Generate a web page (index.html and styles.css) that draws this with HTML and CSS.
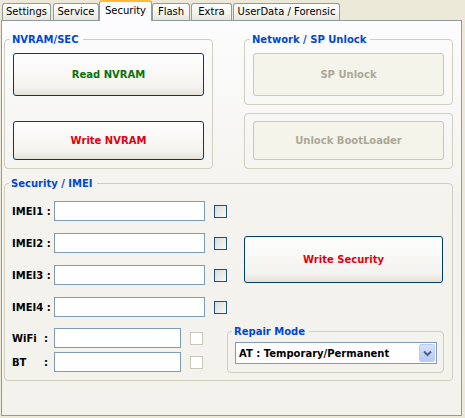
FILE: index.html
```html
<!DOCTYPE html>
<html>
<head>
    <title>Security</title>
    <link rel="stylesheet" href="styles.css">
</head>
<body>
    <div class="tabs">
        <div class="tab tab-settings">Settings</div>
        <div class="tab tab-service">Service</div>
        <div class="tab tab-security active">Security</div>
        <div class="tab tab-flash">Flash</div>
        <div class="tab tab-extra">Extra</div>
        <div class="tab tab-userdata">UserData / Forensic</div>
    </div>

    <div class="page">
        <div class="top">
            <fieldset class="group">
                <legend>NVRAM/SEC</legend>
                <button class="btn tall green">Read NVRAM</button>
                <button class="btn red spaced">Write NVRAM</button>
            </fieldset>
            <div class="col">
                <fieldset class="group">
                    <legend>Network / SP Unlock</legend>
                    <button class="btn tall" disabled>SP Unlock</button>
                </fieldset>
                <div class="group plain">
                    <button class="btn" disabled>Unlock BootLoader</button>
                </div>
            </div>
        </div>

        <fieldset class="group security">
            <legend>Security / IMEI</legend>
            <div class="imei-area">
                <div class="rows">
                    <div class="row">
                        <span class="lbl">IMEI1 :</span>
                        <input type="text" class="field">
                        <span class="check"></span>
                    </div>
                    <div class="row">
                        <span class="lbl">IMEI2 :</span>
                        <input type="text" class="field">
                        <span class="check"></span>
                    </div>
                    <div class="row">
                        <span class="lbl">IMEI3 :</span>
                        <input type="text" class="field">
                        <span class="check"></span>
                    </div>
                    <div class="row">
                        <span class="lbl">IMEI4 :</span>
                        <input type="text" class="field">
                        <span class="check"></span>
                    </div>
                </div>
                <button class="btn wide red">Write Security</button>
            </div>

            <div class="bottom-area">
                <div class="rows small">
                    <div class="row">
                        <span class="lbl"><span class="name">WiFi</span>:</span>
                        <input type="text" class="field short">
                        <span class="check off"></span>
                    </div>
                    <div class="row">
                        <span class="lbl"><span class="name">BT</span>:</span>
                        <input type="text" class="field short">
                        <span class="check off"></span>
                    </div>
                </div>
                <fieldset class="group repair">
                    <legend>Repair Mode</legend>
                    <div class="combo">
                        <span>AT : Temporary/Permanent</span>
                        <span class="arrow">
                            <svg width="9" height="7" viewBox="0 0 9 7">
                                <path d="M1 1.5 L4.5 5 L8 1.5" fill="none" stroke="#4d6185" stroke-width="2"/>
                            </svg>
                        </span>
                    </div>
                </fieldset>
            </div>
        </fieldset>
    </div>
</body>
</html>
```

FILE: styles.css
```css
* {
    box-sizing: border-box;
}

body {
    margin: 0;
    background-color: #ece9d8;
    font-family: "DejaVu Sans", sans-serif;
    font-size: 10px;
}

/* tab strip */

.tabs {
    display: flex;
    align-items: flex-end;
    height: 20px;
    padding-left: 2px;
    position: relative;
    z-index: 1;
}

.tab {
    height: 17px;
    margin-right: 2px;
    border: 1px solid #919b9c;
    border-bottom: none;
    border-radius: 3px 3px 0 0;
    background: linear-gradient(#ffffff, #f3f3ef 60%, #e6e5dc);
    font-size: 10px;
    line-height: 16px;
    text-align: center;
    white-space: nowrap;
    color: #000;
}

.tab.active {
    height: 21px;
    margin-bottom: -1px;
    border-top: 2px solid #ffb93b;
    background: #fcfcfe;
    line-height: 17px;
}

.tab-settings { width: 49px; }
.tab-service { width: 46px; margin-right: 0; }
.tab-security { width: 53px; margin-right: 0; }
.tab-flash { width: 38px; margin-right: 1px; }
.tab-extra { width: 41px; margin-right: 1px; }
.tab-userdata { width: 107px; }

/* page */

.page {
    width: 461px;
    height: 396px;
    margin-left: 1px;
    padding: 12px 0 0 2px;
    border: 1px solid #919b9c;
    background: linear-gradient(#fcfcfe, #f4f3ee 45%, #f3f2ec);
}

.top {
    display: flex;
    gap: 31px;
}

.group {
    width: 209px;
    margin: 0;
    min-width: 0;
    padding: 7px 8px 8px 8px;
    border: 1px solid #d0d0bf;
    border-radius: 4px;
}

.group legend {
    margin-left: -3px;
    padding: 0 4px 0 2px;
    color: #0046d5;
    font-weight: bold;
    font-size: 10px;
    line-height: 13px;
}

.plain {
    margin-top: 8px;
}

/* buttons */

.btn {
    display: block;
    width: 191px;
    height: 39px;
    padding: 0;
    border: 1px solid #003c74;
    border-radius: 3px;
    background: linear-gradient(#fefefe, #f4f3ef 80%, #e4e1d7);
    font-family: "DejaVu Sans", sans-serif;
    font-size: 10px;
    font-weight: bold;
    color: #000;
}

.btn.tall {
    height: 43px;
}

.btn.spaced {
    margin-top: 25px;
}

.btn:disabled {
    border-color: #c9c7ba;
    background: #f5f4ea;
    color: #aca899;
}

.green {
    color: #0a720a;
}

.red {
    color: #e00010;
}

/* security / imei */

.security {
    width: 449px;
    margin-top: 8px;
    padding: 11px 8px 7px 7px;
}

.imei-area {
    display: flex;
    align-items: center;
}

.rows {
    display: flex;
    flex-direction: column;
    gap: 12px;
}

.rows.small {
    padding-top: 3px;
    gap: 4px;
}

.row {
    display: flex;
    align-items: center;
    height: 20px;
}

.lbl {
    display: flex;
    width: 42px;
    font-weight: bold;
    color: #000;
}

.lbl .name {
    width: 32px;
}

.field {
    width: 151px;
    height: 20px;
    padding: 0 2px;
    border: 1px solid #7f9db9;
    background: #fff;
    font-size: 10px;
}

.field.short {
    width: 127px;
}

.check {
    width: 13px;
    height: 13px;
    margin-left: 9px;
    border: 1px solid #1c5180;
    background: linear-gradient(135deg, #dcdcd7, #f8f8f6);
}

.check.off {
    border-color: #cac8bb;
    background: #fff;
}

.btn.wide {
    width: 199px;
    height: 47px;
    margin-left: 17px;
}

.bottom-area {
    display: flex;
    align-items: flex-start;
    margin-top: 8px;
}

.repair {
    width: 217px;
    margin-left: 24px;
    padding: 4px 6px 8px 7px;
}

.combo {
    display: flex;
    align-items: center;
    width: 202px;
    height: 22px;
    padding: 1px 1px 1px 3px;
    border: 1px solid #7f9db9;
    background: #fff;
    font-weight: bold;
    color: #000;
}

.arrow {
    display: flex;
    align-items: center;
    justify-content: center;
    width: 16px;
    height: 18px;
    margin-left: auto;
    border: 1px solid #b9cdf6;
    border-radius: 2px;
    background: linear-gradient(#d6e2fd, #b6caf6);
}
```
